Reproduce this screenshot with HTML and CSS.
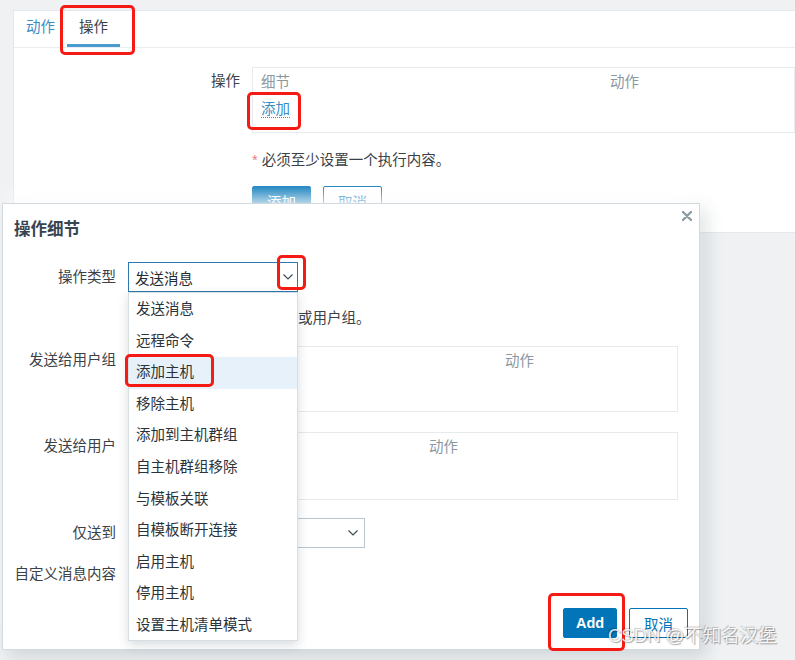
FILE: index.html
```html
<!DOCTYPE html>
<html lang="zh-CN">
<head>
    <meta charset="UTF-8">
    <meta name="viewport" content="width=device-width, initial-scale=1.0">
    <title>操作细节</title>
    <link rel="stylesheet" href="styles.css">
</head>
<body>
<div class="screen">

    <!-- Action edit card with tabs -->
    <div class="card">
        <ul class="tabs">
            <li class="tab"><a href="#">动作</a></li>
            <li class="tab active">操作</li>
        </ul>

        <div class="card-form">
            <div class="form-row">
                <label class="form-label label-head">操作</label>
                <div class="table-box table-ops">
                    <div class="table-head">
                        <span class="cell col-detail">细节</span>
                        <span class="cell">动作</span>
                    </div>
                    <div class="table-body">
                        <a href="#" class="link-dotted">添加</a>
                    </div>
                </div>
            </div>

            <div class="form-row">
                <span class="form-label"></span>
                <p class="hint"><span class="asterisk">*</span> 必须至少设置一个执行内容。</p>
            </div>

            <div class="form-row">
                <span class="form-label"></span>
                <div class="buttons">
                    <button class="btn btn-primary">添加</button>
                    <button class="btn btn-alt">取消</button>
                </div>
            </div>
        </div>
    </div>

    <!-- Operation details dialog -->
    <div class="modal">
        <h4 class="modal-title">操作细节</h4>
        <button class="modal-close" title="关闭">
            <svg width="10" height="10" viewBox="0 0 10 10"><path d="M1 1 L9 9 M9 1 L1 9" stroke="#8d9ba3" stroke-width="2.4" stroke-linecap="round"/></svg>
        </button>

        <div class="modal-form">
            <div class="modal-row row-type">
                <label class="modal-label label-select">操作类型</label>
                <div class="select select-focus">
                    <span>发送消息</span>
                    <svg class="chevron" width="10" height="6" viewBox="0 0 10 6"><polyline points="0.5,0.5 5,5 9.5,0.5" fill="none" stroke="#3d4b55" stroke-width="1.2"/></svg>
                </div>
            </div>

            <!-- the start of this line is covered by the open list -->
            <div class="modal-row row-msg">
                <span class="modal-label"></span>
                <p class="hint hint-modal">或用户组。</p>
            </div>

            <div class="modal-row row-groups">
                <label class="modal-label label-top">发送给用户组</label>
                <div class="table-box table-modal">
                    <div class="table-head">
                        <span class="cell col-groups"></span>
                        <span class="cell">动作</span>
                    </div>
                    <div class="table-body"></div>
                </div>
            </div>

            <div class="modal-row row-users">
                <label class="modal-label label-top">发送给用户</label>
                <div class="table-box table-modal table-tall">
                    <div class="table-head">
                        <span class="cell col-users"></span>
                        <span class="cell">动作</span>
                    </div>
                    <div class="table-body"></div>
                </div>
            </div>

            <div class="modal-row row-only">
                <label class="modal-label label-select">仅送到</label>
                <div class="select select-wide">
                    <span></span>
                    <svg class="chevron" width="10" height="6" viewBox="0 0 10 6"><polyline points="0.5,0.5 5,5 9.5,0.5" fill="none" stroke="#3d4b55" stroke-width="1.2"/></svg>
                </div>
            </div>

            <div class="modal-row row-custom">
                <label class="modal-label">自定义消息内容</label>
            </div>
        </div>

        <div class="modal-footer">
            <button class="btn btn-primary btn-add">Add</button>
            <button class="btn btn-alt">取消</button>
        </div>

        <!-- Opened list of the operation type select -->
        <ul class="dropdown">
            <li>发送消息</li>
            <li>远程命令</li>
            <li class="hover">添加主机</li>
            <li>移除主机</li>
            <li>添加到主机群组</li>
            <li>自主机群组移除</li>
            <li>与模板关联</li>
            <li>自模板断开连接</li>
            <li>启用主机</li>
            <li>停用主机</li>
            <li>设置主机清单模式</li>
        </ul>
    </div>

    <!-- Red annotation frames -->
    <div class="mark mark-tab"></div>
    <div class="mark mark-add-link"></div>
    <div class="mark mark-chevron"></div>
    <div class="mark mark-option"></div>
    <div class="mark mark-add-btn"></div>

    <div class="watermark">CSDN @不知名汉堡</div>
</div>
</body>
</html>
```

FILE: styles.css
```css
* {
    box-sizing: border-box;
}

body {
    margin: 0;
    background-color: #eff1f3;
    font-family: "Liberation Sans", Arial, "Noto Sans CJK SC", sans-serif;
    font-size: 14.5px;
    color: #1f2c33;
}

.screen {
    position: relative;
    width: 795px;
    height: 660px;
    overflow: hidden;
    padding-top: 10px;
}

/* Card behind the dialog */
.card {
    margin-left: 13px;
    height: 223px;
    background-color: #fff;
    border: 1px solid #e4e8eb;
    border-right: none;
}

.tabs {
    list-style: none;
    margin: 0;
    padding: 0;
    display: flex;
    height: 37px;
    border-bottom: 1px solid #ebeef0;
}

.tab {
    padding: 0 12px;
    line-height: 33px;
    border-bottom: 3px solid transparent;
    color: #3a4248;
}

.tab a {
    color: #3a8cc6;
    text-decoration: none;
}

.tab.active {
    border-bottom-color: #4b9ad0;
}

.card-form {
    padding-top: 19px;
}

.form-row {
    display: flex;
    gap: 12px;
}

.form-label {
    flex: none;
    width: 226px;
    text-align: right;
    line-height: 20px;
    color: #3a4248;
}

.label-head {
    line-height: 28px;
}

.table-box {
    border: 1px solid #e8ebed;
    background-color: #fff;
}

.table-ops {
    width: 600px;
}

.table-head {
    display: flex;
    height: 28px;
    line-height: 28px;
    color: #8b989f;
}

.cell {
    padding: 0 8px;
}

.col-detail {
    width: 349px;
}

.table-body {
    height: 36px;
    padding: 3px 8px 13px;
    line-height: 20px;
}

.link-dotted {
    color: #3a8cc6;
    text-decoration: none;
    border-bottom: 1px dotted #3a8cc6;
}

.hint {
    margin: 17px 0 0;
    line-height: 20px;
    color: #3a4248;
}

.asterisk {
    color: #e87d7d;
}

.buttons {
    margin-top: 16px;
    display: flex;
    gap: 12px;
}

.btn {
    height: 30px;
    padding: 0 14px;
    font-family: inherit;
    font-size: 14.5px;
    border-radius: 2px;
    cursor: pointer;
}

.btn-primary {
    background-color: #0275b8;
    border: 1px solid #0275b8;
    color: #fff;
}

.btn-alt {
    background-color: #fff;
    border: 1px solid #0275b8;
    color: #0275b8;
}

.btn-add {
    width: 54px;
    padding: 0;
    font-weight: bold;
}

/* Dialog */
.modal {
    position: absolute;
    left: 2px;
    top: 203px;
    width: 698px;
    height: 447px;
    display: flex;
    flex-direction: column;
    background-color: #fff;
    border: 1px solid #d3dadf;
    box-shadow: 0 -14px 18px -6px rgba(255, 255, 255, 0.85), 6px 6px 16px rgba(40, 60, 75, 0.16);
}

.modal-title {
    margin: 13px 0 0 11px;
    font-size: 16.5px;
    line-height: 24px;
    font-weight: bold;
    color: #36454f;
}

.modal-close {
    position: absolute;
    right: 7px;
    top: 7px;
    padding: 0;
    border: none;
    background: none;
    width: 10px;
    height: 10px;
    line-height: 0;
}

.modal-form {
    margin-top: 21px;
}

.modal-row {
    display: flex;
    gap: 12px;
}

.modal-label {
    flex: none;
    width: 113px;
    text-align: right;
    line-height: 20px;
    color: #3a4248;
}

.label-select {
    line-height: 30px;
}

.label-top {
    padding-top: 4px;
}

.row-msg {
    margin-top: 16px;
}

.hint-modal {
    margin: 0;
    padding-left: 170px;
}

.row-groups {
    margin-top: 18px;
}

.row-users {
    margin-top: 20px;
}

.row-only {
    margin-top: 18px;
}

.row-custom {
    margin-top: 16px;
}

.table-modal {
    width: 550px;
}

.table-tall .table-body {
    height: 38px;
}

.col-groups {
    width: 368px;
}

.col-users {
    width: 292px;
}

.select {
    display: flex;
    align-items: center;
    justify-content: space-between;
    height: 30px;
    padding: 0 4px 0 6px;
    border: 1px solid #b9c6ce;
    background-color: #fff;
}

.select-focus {
    width: 170px;
    border-color: #2e79b0;
}

.select-wide {
    width: 237px;
    padding-right: 6px;
}

.modal-footer {
    margin-top: auto;
    display: flex;
    justify-content: flex-end;
    gap: 12px;
    padding: 0 11px 11px 0;
}

.dropdown {
    position: absolute;
    left: 125px;
    top: 88px;
    width: 170px;
    height: 349px;
    margin: 0;
    padding: 1px 0 0;
    list-style: none;
    background-color: #fff;
    border: 1px solid #d8dfe3;
    box-shadow: 0 4px 10px rgba(40, 60, 75, 0.18);
}

.dropdown li {
    height: 31.6px;
    line-height: 31.6px;
    padding-left: 7px;
    color: #2b333a;
}

.dropdown li.hover {
    background-color: #e6f1fa;
}

/* Annotations */
.mark {
    position: absolute;
    border: 3px solid #f51b14;
    border-radius: 5px;
}

.mark-tab {
    left: 60px;
    top: 5px;
    width: 75px;
    height: 50px;
}

.mark-add-link {
    left: 247px;
    top: 92px;
    width: 54px;
    height: 38px;
}

.mark-chevron {
    left: 277px;
    top: 255px;
    width: 29px;
    height: 35px;
}

.mark-option {
    left: 125px;
    top: 354px;
    width: 89px;
    height: 33px;
}

.mark-add-btn {
    left: 548px;
    top: 593px;
    width: 77px;
    height: 58px;
}

.watermark {
    position: absolute;
    left: 608px;
    top: 625px;
    font-size: 18.5px;
    line-height: 22px;
    color: rgba(255, 255, 255, 0.85);
    text-shadow: 1px 1px 1px rgba(0, 0, 0, 0.35), -1px -1px 1px rgba(0, 0, 0, 0.2);
    white-space: nowrap;
}
```
